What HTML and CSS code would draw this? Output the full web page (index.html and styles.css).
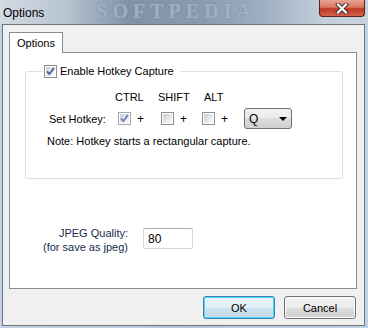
FILE: index.html
```html
<!DOCTYPE html>
<html lang="en">
<head>
    <meta charset="UTF-8">
    <meta name="viewport" content="width=device-width, initial-scale=1.0">
    <title>Options</title>
    <link rel="stylesheet" href="styles.css">
</head>
<body>
    <div class="window">
        <div class="titlebar">
            <span class="title">Options</span>
            <span class="watermark">SOFTPEDIA</span>
            <button class="close">
                <svg width="14" height="11" viewBox="0 0 14 11">
                    <path d="M3 1.5 L11 9.5 M11 1.5 L3 9.5" stroke="#3a2a2a" stroke-width="4" stroke-linecap="square"/>
                    <path d="M3 1.5 L11 9.5 M11 1.5 L3 9.5" stroke="#fff" stroke-width="2.2" stroke-linecap="square"/>
                </svg>
            </button>
        </div>

        <div class="client">
            <div class="tab">Options</div>
            <div class="panel">
                <fieldset class="group">
                    <legend>
                        <span class="box checked"><svg viewBox="0 0 9 9"><path d="M1 4.5 L3.5 7 L8 1" fill="none" stroke="#4a5d9b" stroke-width="1.8"/></svg></span>
                        <span>Enable Hotkey Capture</span>
                    </legend>

                    <div class="hotkeys">
                        <span></span>
                        <span class="head">CTRL</span>
                        <span class="head">SHIFT</span>
                        <span class="head alt">ALT</span>
                        <span></span>

                        <span class="label">Set Hotkey:</span>
                        <span class="cell"><span class="box checked faded"><svg viewBox="0 0 9 9"><path d="M1 4.5 L3.5 7 L8 1" fill="none" stroke="#6a7db8" stroke-width="1.8"/></svg></span><span class="plus">+</span></span>
                        <span class="cell"><span class="box"></span><span class="plus">+</span></span>
                        <span class="cell alt"><span class="box"></span><span class="plus">+</span></span>
                        <span class="select">Q <i class="arrow"></i></span>
                    </div>

                    <p class="note">Note: Hotkey starts a rectangular capture.</p>
                </fieldset>

                <div class="quality">
                    <div class="quality-label">JPEG Quality:<br>(for save as jpeg)</div>
                    <div class="textbox">80</div>
                </div>
            </div>

            <div class="actions">
                <button class="btn default">OK</button>
                <button class="btn">Cancel</button>
            </div>
        </div>
    </div>
</body>
</html>
```

FILE: styles.css
```css
/* window */
body{
  margin: 0;
  font-family: "Liberation Sans", Arial, sans-serif;
  font-size: 11px;
  color: #000;
}
.window{
  width: 368px;
  height: 328px;
  background: linear-gradient(to right, #c3d3e4, #b6c8dc 50%, #c0d2e6);
  overflow: hidden;
}
.titlebar{
  height: 24px;
  display: flex;
  align-items: flex-start;
  background: linear-gradient(to right, #d3dbe3 0%, #b7c4d1 18%, #7f92a7 35%, #8a9cb0 55%, #9fb0c2 72%, #c4cfda 88%, #c8d3de 100%);
}
.title{
  font-size: 12px;
  margin: 6px 0 0 3px;
}
.watermark{
  font-family: "Liberation Serif", serif;
  font-weight: bold;
  font-size: 20px;
  line-height: 22px;
  letter-spacing: 5px;
  color: rgba(170, 190, 212, 0.7);
  text-shadow: 0 0 3px rgba(120, 140, 165, 0.8);
  margin: 0 0 0 52px;
}
.close{
  margin-left: auto;
  margin-right: 3px;
  width: 46px;
  height: 17px;
  padding: 0;
  border: 1px solid #5b2218;
  border-top: none;
  border-radius: 0 0 4px 4px;
  background: linear-gradient(#e9a496, #d9755f 45%, #c0361f 55%, #d2614a);
  display: flex;
  justify-content: center;
  align-items: center;
}

/* client */
.client{
  margin: 0 3px 0 2px;
  height: 302px;
  box-sizing: border-box;
  border: 1px solid #6f747a;
  background-color: #f0f0f0;
  padding: 7px 7px 0 6px;
}
.tab{
  position: relative;
  z-index: 1;
  width: 54px;
  height: 21px;
  box-sizing: border-box;
  border: 1px solid #898c95;
  border-bottom: none;
  background-color: #fff;
  margin-bottom: -1px;
  padding: 4px 0 0 7px;
}
.panel{
  height: 237px;
  box-sizing: border-box;
  border: 1px solid #898c95;
  background-color: #fff;
  padding-top: 12px;
}

/* hotkey group */
.group{
  margin: 0 13px 0 15px;
  padding: 12px 0 30px 0;
  border: 1px solid #d5dfe5;
  border-radius: 3px;
}
.group legend{
  margin-left: 16px;
  padding: 0 7px 0 2px;
  display: flex;
  align-items: center;
  gap: 3px;
  line-height: 13px;
}
.box{
  width: 13px;
  height: 13px;
  box-sizing: border-box;
  border: 1px solid #8e8f8f;
  padding: 1px;
  background: linear-gradient(135deg, #c9cdd3, #eef0f2 70%, #f8f8f8) content-box, #fff;
  display: inline-flex;
  justify-content: center;
  align-items: center;
}
.box svg{
  width: 9px;
  height: 9px;
}
.box.faded{
  border-color: #a3a6aa;
}
.hotkeys{
  display: grid;
  grid-template-columns: 65px 43px 42px 45px 48px;
  grid-template-rows: 14px 21px;
  row-gap: 4px;
  align-items: center;
  padding-left: 23px;
}
.head{
  padding-left: 1px;
}
.head.alt{
  padding-left: 5px;
}
.cell{
  display: flex;
  align-items: center;
  padding-left: 4px;
}
.cell.alt{
  padding-left: 3px;
}
.plus{
  margin-left: 6px;
  font-size: 12px;
}
.select{
  height: 21px;
  box-sizing: border-box;
  border: 1px solid #707070;
  border-radius: 3px;
  background: linear-gradient(#f2f2f2, #ebebeb 50%, #dddddd 50%, #cfcfcf);
  display: flex;
  align-items: center;
  padding: 0 4px 0 4px;
  font-size: 12px;
}
.arrow{
  margin-left: auto;
  width: 0;
  height: 0;
  border-left: 4px solid transparent;
  border-right: 4px solid transparent;
  border-top: 4px solid #000;
}
.note{
  margin: 5px 0 0 21px;
  line-height: 14px;
}

/* jpeg */
.quality{
  display: flex;
  align-items: flex-start;
  margin: 47px 0 0 33px;
  gap: 15px;
}
.quality-label{
  width: 85px;
  text-align: right;
  line-height: 14px;
  color: #1a2a4a;
}
.textbox{
  width: 50px;
  height: 21px;
  box-sizing: border-box;
  margin-top: 2px;
  border: 1px solid #d3d7dc;
  border-top-color: #abadb3;
  border-radius: 2px;
  padding: 3px 0 0 4px;
  font-size: 12px;
  background-color: #fff;
}

/* buttons */
.actions{
  display: flex;
  justify-content: flex-end;
  gap: 9px;
  margin-top: 7px;
  padding-right: 1px;
}
.btn{
  width: 72px;
  height: 23px;
  border: 1px solid #707070;
  border-radius: 3px;
  background: linear-gradient(#f2f2f2, #ebebeb 50%, #dddddd 50%, #cfcfcf);
  box-shadow: inset 0 0 0 1px #fcfcfc;
  font-family: "Liberation Sans", Arial, sans-serif;
  font-size: 11px;
  padding: 0;
}
.btn.default{
  border-color: #3c7fb1;
  background: linear-gradient(#eaf4fa, #dfeef7 50%, #cde3f0 50%, #c3dbea);
  box-shadow: inset 0 0 0 1px #48d8fb;
}
```
